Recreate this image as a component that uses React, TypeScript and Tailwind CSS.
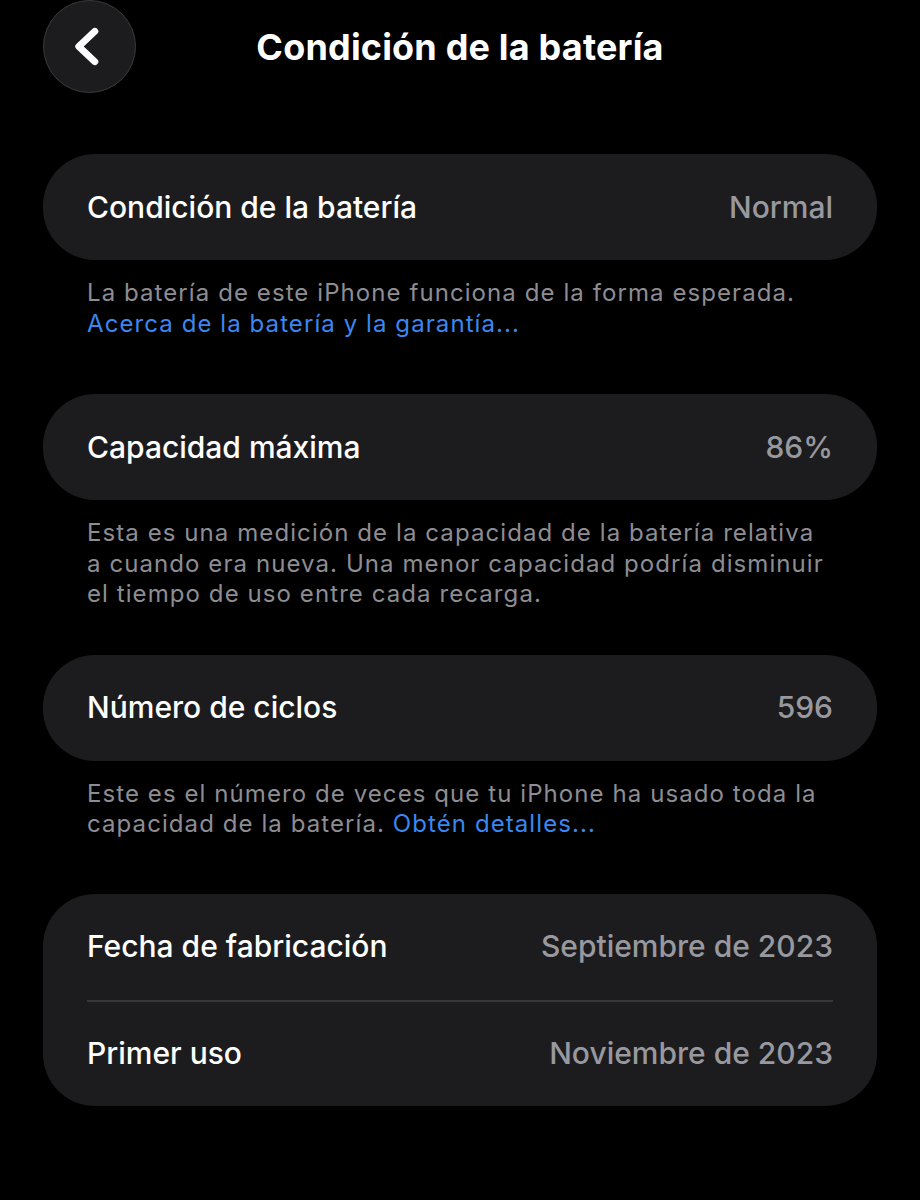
type Row = { label: string; value: string };

function Card({ rows }: { rows: Row[] }) {
  return (
    <div className="rounded-[52px] bg-[#1c1c1e] px-11">
      {rows.map((row, i) => (
        <div
          key={row.label}
          className={`flex h-[106px] items-center justify-between ${i > 0 ? 'border-t-2 border-[#38383a]' : ''}`}
        >
          <span className="text-[30px] font-medium text-white">{row.label}</span>
          <span className="text-[30px] font-medium text-[#98989f]">{row.value}</span>
        </div>
      ))}
    </div>
  );
}

function Note({ children }: { children: React.ReactNode }) {
  return (
    <p className="pt-[18px] pl-11 pr-[50px] text-[24px] leading-[30.5px] tracking-[0.045em] text-[#8d8d93]">
      {children}
    </p>
  );
}

export default function App() {
  return (
    <div
      className="min-h-[1200px] w-[920px] bg-black"
      style={{ fontFamily: 'Inter, "Noto Sans", sans-serif' }}
    >
      <header className="relative flex h-[94px] items-center justify-center">
        <button className="absolute left-[43px] top-0 flex h-[93px] w-[93px] items-center justify-center rounded-full border border-[#3a3a3c] bg-[#1c1c1e]">
          <svg width="93" height="93" viewBox="0 0 93 93" fill="none">
            <path
              d="M52 31 L35.5 46.5 L52 62"
              stroke="white"
              strokeWidth="7"
              strokeLinecap="round"
              strokeLinejoin="round"
            />
          </svg>
        </button>
        <h1 className="text-[36px] font-bold tracking-[0.005em] text-white">
          Condición de la batería
        </h1>
      </header>

      <main className="px-[43px] pt-[60px]">
        <Card rows={[{ label: 'Condición de la batería', value: 'Normal' }]} />
        <Note>
          La batería de este iPhone funciona de la forma esperada.
          <br />
          <span className="text-[#3b87f0]">Acerca de la batería y la garantía...</span>
        </Note>

        <div className="pt-[55px]">
          <Card rows={[{ label: 'Capacidad máxima', value: '86%' }]} />
        </div>
        <Note>
          Esta es una medición de la capacidad de la batería relativa a cuando era nueva. Una
          menor capacidad podría disminuir el tiempo de uso entre cada recarga.
        </Note>

        <div className="pt-[45px]">
          <Card rows={[{ label: 'Número de ciclos', value: '596' }]} />
        </div>
        <Note>
          Este es el número de veces que tu iPhone ha usado toda la capacidad de la batería.{' '}
          <span className="text-[#3b87f0]">Obtén detalles...</span>
        </Note>

        <div className="pt-[54px]">
          <Card
            rows={[
              { label: 'Fecha de fabricación', value: 'Septiembre de 2023' },
              { label: 'Primer uso', value: 'Noviembre de 2023' },
            ]}
          />
        </div>
      </main>
    </div>
  );
}
